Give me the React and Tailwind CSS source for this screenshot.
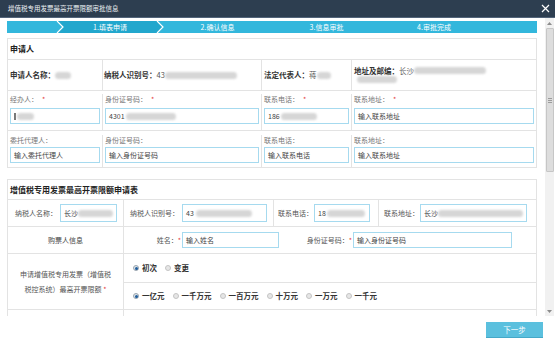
import React from "react";

const line = "border-[#e3e3e3]";

function Blob({ className = "" }) {
  return (
    <span
      className={`inline-block h-[7px] rounded-full bg-[#d6d6d6] blur-[1.2px] ${className}`}
    />
  );
}

function Star({ className = "ml-[4px]" }) {
  return <span className={`text-[#e4393c] ${className}`}>*</span>;
}

function Field({ className = "h-[16px]", children }) {
  return (
    <div
      className={`border border-[#a6daef] bg-white flex items-center px-[3px] text-[7px] leading-none text-[#444] whitespace-nowrap overflow-hidden ${className}`}
    >
      {children}
    </div>
  );
}

function Radio({ checked, label }) {
  return (
    <span className="flex items-center gap-[3px]">
      {checked ? (
        <span className="w-[6px] h-[6px] rounded-full bg-[#dfe5ea] border border-[#9aa6b0] flex items-center justify-center">
          <span className="w-[3px] h-[3px] rounded-full bg-[#1f5d9c]" />
        </span>
      ) : (
        <span className="w-[6px] h-[6px] rounded-full bg-[#e6e6e6] border border-[#c4c4c4]" />
      )}
      <span className="text-[7.5px] leading-none font-bold text-[#333]">{label}</span>
    </span>
  );
}

function Steps() {
  return (
    <div className="relative h-[12px] bg-[#33b7dc]">
      <svg className="absolute inset-0" width="530" height="12" viewBox="0 0 530 12">
        <polygon points="50,0 150,0 156,6 150,12 50,12 56,6" fill="#22a7cd" />
        <polyline points="50,0 56,6 50,12" fill="none" stroke="#fff" strokeWidth="1.2" />
        <polyline points="150,0 156,6 150,12" fill="none" stroke="#fff" strokeWidth="1.2" />
      </svg>
      <div className="relative flex h-full items-center text-[7px] leading-none text-white">
        <span className="w-[53px]" />
        <span className="w-[100px] text-center">1.填表申请</span>
        <span className="w-[115px] text-center">2.确认信息</span>
        <span className="w-[103px] text-center">3.信息审批</span>
        <span className="w-[112px] text-center">4.审批完成</span>
      </div>
    </div>
  );
}

function LabelCell({ className, label, required, children }) {
  return (
    <div className={`px-[2px] ${className}`}>
      <div className="h-[10px] leading-[10px] text-[7px] text-[#777] whitespace-nowrap">
        {label}
        {required && <Star />}
      </div>
      {children}
    </div>
  );
}

function Applicant() {
  return (
    <div className={`mt-[5px] border ${line}`}>
      <div className={`h-[21px] border-b ${line} flex items-center pl-[2px] text-[8px] font-bold text-[#222]`}>
        申请人
      </div>

      {/* Fixed info */}
      <div className={`h-[31px] border-b ${line} flex text-[7.5px] leading-none text-[#333]`}>
        <div className={`w-[95px] border-r ${line} flex items-center pl-[2px]`}>
          <span className="font-bold">申请人名称：</span>
          <Blob className="w-[16px]" />
        </div>
        <div className={`w-[159px] border-r ${line} flex items-center pl-[1px]`}>
          <span className="font-bold">纳税人识别号：</span>
          <span className="text-[#555]">43</span>
          <Blob className="w-[72px]" />
        </div>
        <div className={`w-[90px] border-r ${line} flex items-center pl-[2px]`}>
          <span className="font-bold">法定代表人：</span>
          <span className="text-[#555]">蒋</span>
          <Blob className="w-[14px]" />
        </div>
        <div className="flex-1 flex flex-col justify-center pl-[2px] gap-[2px]">
          <div className="flex items-center">
            <span className="font-bold">地址及邮编：</span>
            <span className="text-[#666]">长沙</span>
            <Blob className="w-[72px]" />
          </div>
          <Blob className="w-[40px] ml-[3px]" />
        </div>
      </div>

      {/* Handler */}
      <div className={`h-[40px] border-b ${line} flex pt-[3px]`}>
        <LabelCell className={`w-[95px] border-r ${line}`} label="经办人：" required>
          <Field className="h-[16px] mt-[4px]">
            <span className="w-[2px] h-[7px] bg-[#777] blur-[0.5px]" />
            <Blob className="w-[17px] ml-[1px]" />
          </Field>
        </LabelCell>
        <LabelCell className={`w-[159px] border-r ${line}`} label="身份证号码：" required>
          <Field className="h-[16px] mt-[4px]">
            4301
            <Blob className="w-[50px] ml-[1px]" />
          </Field>
        </LabelCell>
        <LabelCell className={`w-[90px] border-r ${line}`} label="联系电话：" required>
          <Field className="h-[16px] mt-[4px]">
            186
            <Blob className="w-[36px] ml-[1px]" />
          </Field>
        </LabelCell>
        <LabelCell className="flex-1" label="联系地址：" required>
          <Field className="h-[16px] mt-[4px]">输入联系地址</Field>
        </LabelCell>
      </div>

      {/* Agent */}
      <div className="h-[36px] flex pt-[4px]">
        <LabelCell className={`w-[95px] border-r ${line}`} label="委托代理人：">
          <Field className="h-[16px] mt-[2px]">输入委托代理人</Field>
        </LabelCell>
        <LabelCell className={`w-[159px] border-r ${line}`} label="身份证号码：">
          <Field className="h-[16px] mt-[2px]">输入身份证号码</Field>
        </LabelCell>
        <LabelCell className={`w-[90px] border-r ${line}`} label="联系电话：">
          <Field className="h-[16px] mt-[2px]">输入联系电话</Field>
        </LabelCell>
        <LabelCell className="flex-1" label="联系地址：">
          <Field className="h-[16px] mt-[2px]">输入联系地址</Field>
        </LabelCell>
      </div>
    </div>
  );
}

function QuotaForm() {
  return (
    <div className={`mt-[11px] border ${line}`}>
      <div className={`h-[20px] border-b ${line} flex items-center pl-[2px] text-[8px] font-bold text-[#222]`}>
        增值税专用发票最高开票限额申请表
      </div>

      {/* Taxpayer */}
      <div className={`h-[27px] border-b ${line} flex items-center text-[7px] leading-none text-[#555]`}>
        <div className={`w-[116px] h-full border-r ${line} flex items-center pl-[7px]`}>
          <span>纳税人名称：</span>
          <Field className="w-[57px] h-[18px] ml-[3px]">
            长沙
            <Blob className="w-[38px]" />
          </Field>
        </div>
        <div className={`w-[150px] h-full border-r ${line} flex items-center pl-[6px]`}>
          <span>纳税人识别号：</span>
          <Field className="w-[85px] h-[18px] ml-[3px]">
            43
            <Blob className="w-[56px] ml-[2px]" />
          </Field>
        </div>
        <div className={`w-[105px] h-full border-r ${line} flex items-center pl-[4px]`}>
          <span>联系电话：</span>
          <Field className="w-[56px] h-[18px] ml-[1px]">
            18
            <Blob className="w-[38px] ml-[1px]" />
          </Field>
        </div>
        <div className="flex-1 h-full flex items-center pl-[5px]">
          <span>联系地址：</span>
          <Field className="w-[107px] h-[18px] ml-[1px]">
            长沙
            <Blob className="w-[86px]" />
          </Field>
        </div>
      </div>

      {/* Buyer */}
      <div className={`h-[27px] border-b ${line} flex items-center text-[7px] leading-none text-[#555]`}>
        <div className={`w-[116px] h-full border-r ${line} flex items-center justify-center text-[#444]`}>
          购票人信息
        </div>
        <div className="w-[58px] text-right pr-[1px]">
          姓名：<Star className="" />
        </div>
        <Field className="w-[97px] h-[16px]">输入姓名</Field>
        <div className="w-[74px] text-right pr-[1px]">
          身份证号码：<Star className="" />
        </div>
        <Field className="w-[159px] h-[16px]">输入身份证号码</Field>
      </div>

      {/* Quota */}
      <div className={`h-[56px] border-b ${line} flex`}>
        <div className={`w-[116px] border-r ${line} flex items-center justify-center text-center text-[7px] leading-[15px] text-[#555]`}>
          <p>
            申请增值税专用发票（增值税
            <br />
            税控系统）最高开票限额 <Star className="" />
          </p>
        </div>
        <div className="flex-1 flex flex-col">
          <div className={`h-[29px] border-b ${line} flex items-center gap-[8px] pl-[9px]`}>
            <Radio checked label="初次" />
            <Radio label="变更" />
          </div>
          <div className="flex-1 flex items-center gap-[8px] pl-[9px]">
            <Radio checked label="一亿元" />
            <Radio label="一千万元" />
            <Radio label="一百万元" />
            <Radio label="十万元" />
            <Radio label="一万元" />
            <Radio label="一千元" />
          </div>
        </div>
      </div>
      <div className={`h-[30px] flex`}>
        <div className={`w-[116px] border-r ${line}`} />
      </div>
    </div>
  );
}

function Scrollbar() {
  return (
    <div className="w-[9px] h-full bg-[#f1f1f1] flex flex-col items-center">
      <div className="h-[10px] flex items-center justify-center">
        <svg width="5" height="3" viewBox="0 0 5 3">
          <path d="M2.5 0L5 3H0z" fill="#8c8c8c" />
        </svg>
      </div>
      <div className="w-[8px] h-[144px] bg-[#dddddd] border border-[#c6c6c6] rounded-[1px] flex flex-col items-center justify-center gap-[1px]">
        <span className="w-[4px] h-px bg-[#9c9c9c]" />
        <span className="w-[4px] h-px bg-[#9c9c9c]" />
        <span className="w-[4px] h-px bg-[#9c9c9c]" />
      </div>
      <div className="flex-1" />
      <div className="h-[10px] flex items-center justify-center">
        <svg width="5" height="3" viewBox="0 0 5 3">
          <path d="M0 0H5L2.5 3z" fill="#8c8c8c" />
        </svg>
      </div>
    </div>
  );
}

export default function App() {
  return (
    <div className="w-[555px] h-[350px] bg-white overflow-hidden flex flex-col font-['Noto_Sans_CJK_SC','Noto_Sans',sans-serif]">
      {/* Title bar */}
      <div className="h-[18px] shrink-0 bg-[#2d3e50] border-b border-[#52647a] flex items-center justify-between pl-[8px] pr-[5px]">
        <span className="text-[6.5px] leading-none text-[#eef2f5]">增值税专用发票最高开票限额审批信息</span>
        <svg width="9" height="9" viewBox="0 0 9 9">
          <path d="M1 1L8 8M8 1L1 8" stroke="#fff" strokeWidth="1.2" />
        </svg>
      </div>

      {/* Body */}
      <div className="h-[298px] shrink-0 flex">
        <div className="w-[545px] h-full overflow-hidden pl-[7px] pr-[8px] pt-[3px]">
          <Steps />
          <Applicant />
          <QuotaForm />
        </div>
        <Scrollbar />
      </div>

      {/* Footer */}
      <div className="flex-1 flex justify-end items-start pt-[6px] pr-[12px]">
        <button className="w-[57px] h-[16px] bg-[#5bc0de] border-b border-[#45a8c8] text-white text-[7.5px] leading-none">
          下一步
        </button>
      </div>
    </div>
  );
}
